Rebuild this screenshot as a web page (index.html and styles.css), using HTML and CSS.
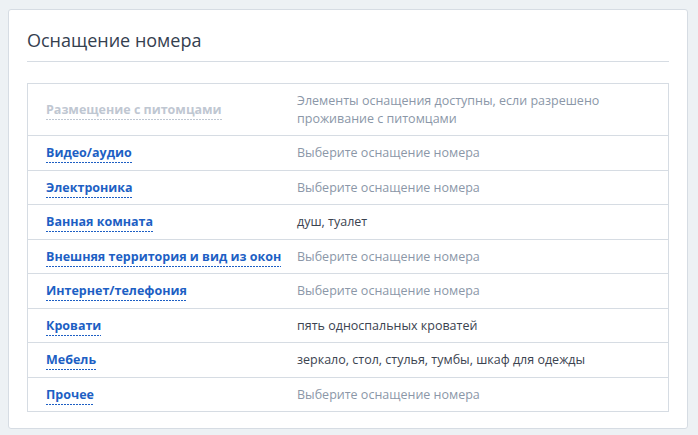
FILE: index.html
```html
<!DOCTYPE html>
<html lang="ru">
<head>
<meta charset="utf-8">
<link rel="stylesheet" href="styles.css">
</head>
<body>
<div class="card">
  <h2 class="title">Оснащение номера</h2>
  <hr class="sep">
  <table class="eq">
    <tr>
      <td class="name"><span class="link disabled">Размещение с питомцами</span></td>
      <td class="val hint">Элементы оснащения доступны, если разрешено проживание с питомцами</td>
    </tr>
    <tr><td class="name"><span class="link">Видео/аудио</span></td><td class="val hint">Выберите оснащение номера</td></tr>
    <tr><td class="name"><span class="link">Электроника</span></td><td class="val hint">Выберите оснащение номера</td></tr>
    <tr><td class="name"><span class="link">Ванная комната</span></td><td class="val">душ, туалет</td></tr>
    <tr><td class="name"><span class="link">Внешняя территория и вид из окон</span></td><td class="val hint">Выберите оснащение номера</td></tr>
    <tr><td class="name"><span class="link">Интернет/телефония</span></td><td class="val hint">Выберите оснащение номера</td></tr>
    <tr><td class="name"><span class="link">Кровати</span></td><td class="val">пять односпальных кроватей</td></tr>
    <tr><td class="name"><span class="link">Мебель</span></td><td class="val">зеркало, стол, стулья, тумбы, шкаф для одежды</td></tr>
    <tr><td class="name"><span class="link">Прочее</span></td><td class="val hint">Выберите оснащение номера</td></tr>
  </table>
</div>
</body>
</html>
```
FILE: styles.css
```css
html, body {
  margin: 0;
  background: #edf1f4;
}
body {
  padding: 9px 10px 0 8px;
  font-family: "Open Sans", "Noto Sans", sans-serif;
}
.card {
  width: 680px;
  height: 420px;
  box-sizing: border-box;
  background: #fff;
  border: 1px solid #d6dce3;
  border-radius: 3px;
  padding: 0 18px 0 18px;
}
.title {
  margin: 0;
  padding-top: 17px;
  font-size: 18px;
  font-weight: 400;
  line-height: 26px;
  color: #34404f;
}
.sep {
  margin: 8px 0 0 0;
  border: 0;
  border-top: 1px solid #d6dce3;
  height: 0;
}
.eq {
  margin-top: 21px;
  width: 642px;
  border-collapse: collapse;
  border: 1px solid #d6dce3;
  font-size: 12.5px;
  line-height: 17.5px;
}
.eq td {
  border-top: 1px solid #d6dce3;
  padding: 8px 0;
  vertical-align: middle;
}
.eq td.name {
  width: 251px;
  padding-left: 18px;
}
.link {
  font-weight: 700;
  color: #1d5fc4;
  padding-bottom: 2px;
  background-image: linear-gradient(to right, #1d5fc4 67%, transparent 0);
  background-size: 3px 1px;
  background-repeat: repeat-x;
  background-position: left bottom;
}
.link.disabled {
  color: #bfc7d2;
  background-image: linear-gradient(to right, #bfc7d2 67%, transparent 0);
}
.val {
  color: #3b4350;
  padding-right: 18px;
}
.val.hint {
  color: #8b97a8;
}
```
